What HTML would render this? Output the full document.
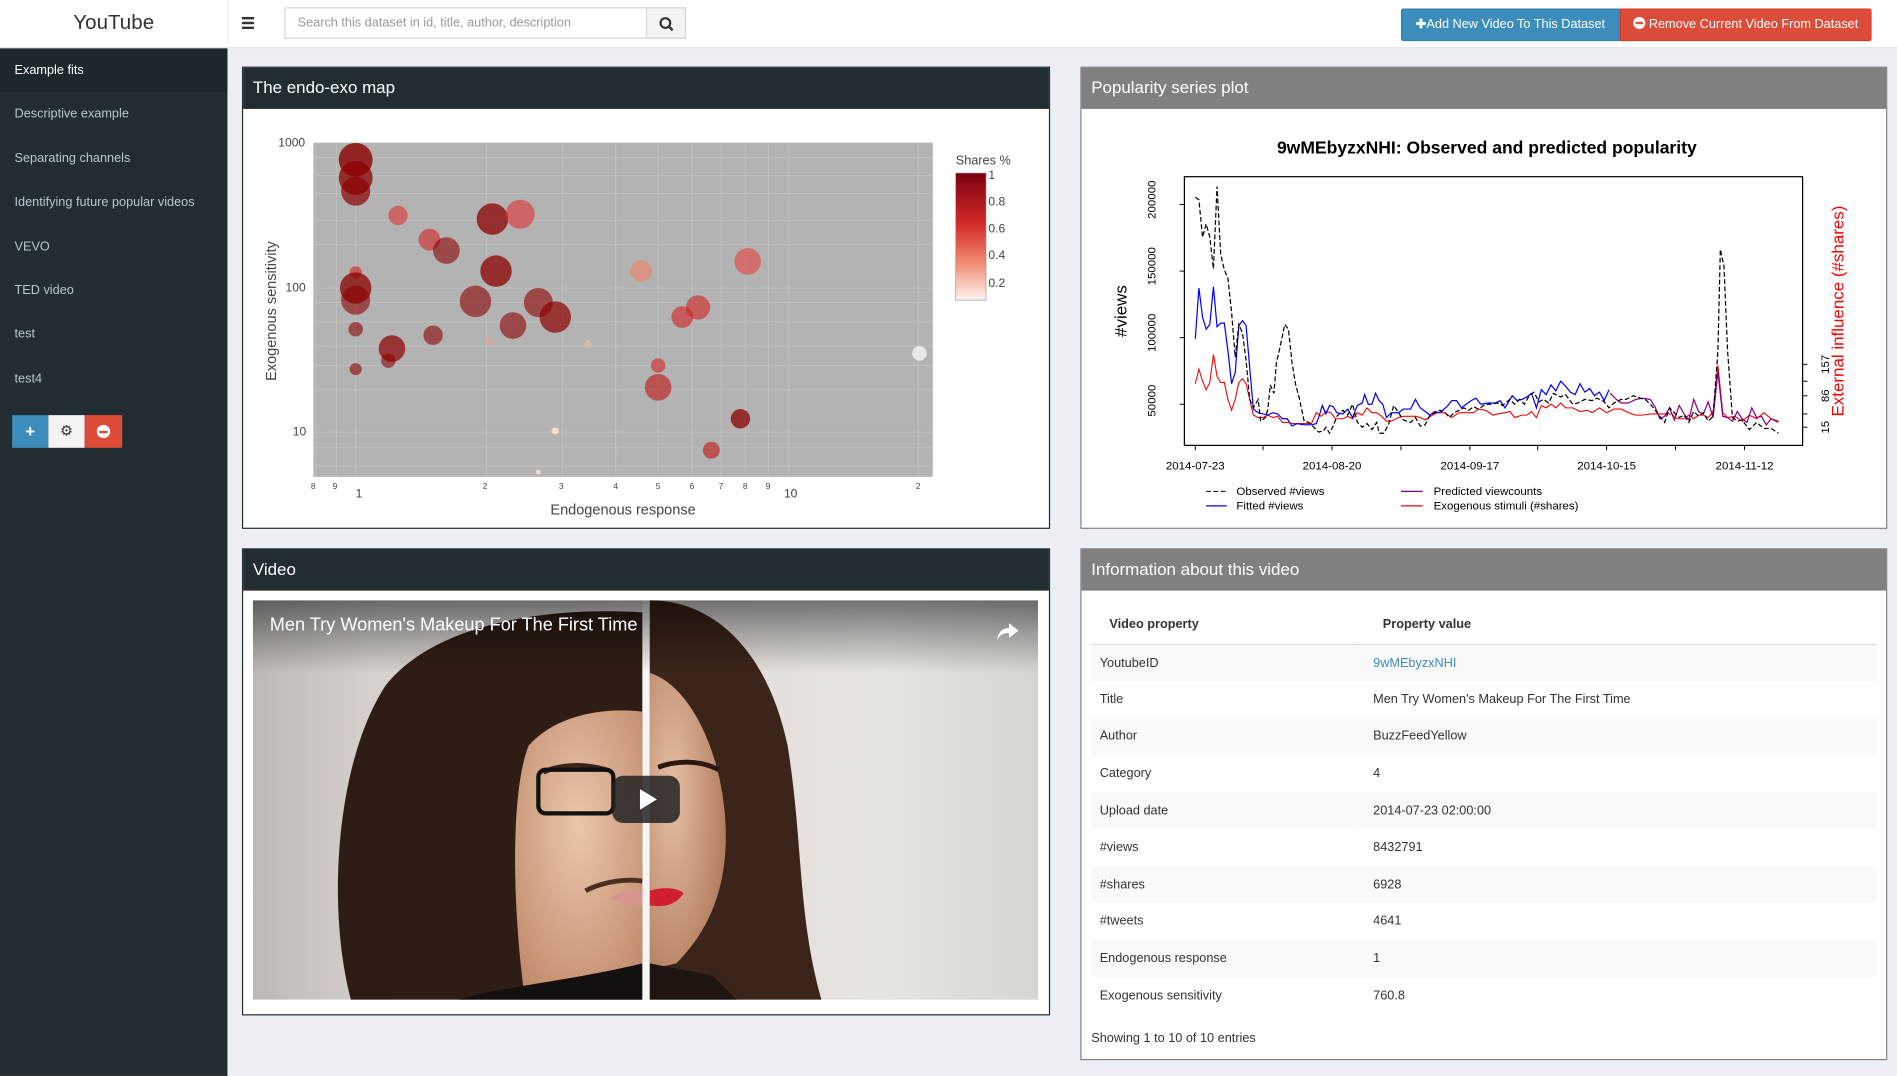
<!DOCTYPE html>
<html><head><meta charset="utf-8"><style>
html,body{margin:0;padding:0;width:1897px;height:1076px;overflow:hidden;background:#ecf0f5;}
#p{position:absolute;left:0;top:0;width:1568px;height:889px;transform:scale(1.2098,1.2103);transform-origin:0 0;font-family:"Liberation Sans",sans-serif;background:#ecf0f5;}
.a{position:absolute;}
.side a{position:absolute;left:0;width:188px;height:36px;line-height:36px;padding-left:12px;box-sizing:border-box;color:#b8c7ce;font-size:10.5px;}
.box{position:absolute;background:#fff;border:1px solid #d2d6de;box-sizing:border-box;}
.bh{height:34px;line-height:33px;color:#fff;font-size:14px;padding-left:8px;}
td{font-size:10.5px;color:#333;}
</style></head><body><div id="p">
<div class="a" style="left:0;top:0;width:1568px;height:40px;background:#fff;border-bottom:1px solid #e0e3e8;box-sizing:border-box"></div>
<div class="a" style="left:0;top:0;width:188px;height:40px;text-align:center;line-height:38px;font-size:17px;color:#333;border-right:1px solid #eee">YouTube</div>
<div class="a" style="left:200px;top:14px;width:10px;height:2px;background:#333;box-shadow:0 4px 0 #333,0 8px 0 #333"></div>
<div class="a" style="left:235px;top:6px;width:300px;height:26px;border:1px solid #d2d6de;box-sizing:border-box;font-size:10.5px;color:#999;line-height:24px;padding-left:10px">Search this dataset in id, title, author, description</div>
<div class="a" style="left:535px;top:6px;width:32px;height:26px;border:1px solid #d2d6de;border-left:none;box-sizing:border-box;background:#f4f4f4"><svg width="32" height="26"><circle cx="15" cy="12" r="4" fill="none" stroke="#333" stroke-width="1.8"/><line x1="18" y1="15" x2="21" y2="18" stroke="#333" stroke-width="2"/></svg></div>
<div class="a" style="left:1158px;top:7px;width:181px;height:27px;background:#3c8dbc;border:1px solid #367fa9;box-sizing:border-box;border-radius:2px 0 0 2px;color:#fff;font-size:10.5px;line-height:25px;text-align:center"><b>✚</b>Add New Video To This Dataset</div>
<div class="a" style="left:1339px;top:7px;width:208px;height:27px;background:#dd4b39;border:1px solid #d73925;box-sizing:border-box;border-radius:0 2px 2px 0;color:#fff;font-size:10.5px;line-height:25px;text-align:center"><span style="display:inline-block;width:10px;height:10px;border-radius:50%;background:#fff;vertical-align:-1px;position:relative"><span style="position:absolute;left:2px;top:4px;width:6px;height:2px;background:#dd4b39"></span></span> Remove Current Video From Dataset</div>
<div class="a side" style="left:0;top:40px;width:188px;height:849px;background:#222d32">
<a style="top:0;background:#1e282c;color:#fff">Example fits</a>
<a style="top:36px">Descriptive example</a>
<a style="top:73px">Separating channels</a>
<a style="top:109px">Identifying future popular videos</a>
<a style="top:146px">VEVO</a>
<a style="top:182px">TED video</a>
<a style="top:218px">test</a>
<a style="top:255px">test4</a>
<div class="a" style="left:10px;top:303px;width:30px;height:27px;background:#3c8dbc;color:#fff;text-align:center;line-height:27px;font-weight:bold;font-size:14px">+</div>
<div class="a" style="left:40px;top:303px;width:30px;height:27px;background:#f4f4f4;color:#333;text-align:center;line-height:27px;font-size:12px">⚙</div>
<div class="a" style="left:70px;top:303px;width:31px;height:27px;background:#dd4b39;text-align:center"><div style="margin:8px auto;width:11px;height:11px;border-radius:50%;background:#fff;position:relative"><div style="position:absolute;left:2px;top:4.5px;width:7px;height:2px;background:#dd4b39"></div></div></div>
</div>
<div class="box" style="left:200px;top:55px;width:668px;height:382px;border-color:#222d32"><div class="bh" style="background:#222d32">The endo-exo map</div></div>
<svg class="a" style="left:0;top:0" width="1568" height="889" font-family="Liberation Sans,sans-serif">
<rect x="259" y="118" width="512" height="276" fill="#b3b3b3"/>
<g stroke="#c4c4c4" stroke-width="0.6">
<line x1="259" y1="118" x2="771" y2="118"/><line x1="259" y1="238" x2="771" y2="238"/><line x1="259" y1="357" x2="771" y2="357"/>
<line x1="259" y1="130" x2="771" y2="130"/><line x1="259" y1="145" x2="771" y2="145"/><line x1="259" y1="160" x2="771" y2="160"/><line x1="259" y1="182" x2="771" y2="182"/><line x1="259" y1="202" x2="771" y2="202"/>
<line x1="259" y1="250" x2="771" y2="250"/><line x1="259" y1="266" x2="771" y2="266"/><line x1="259" y1="286" x2="771" y2="286"/><line x1="259" y1="302" x2="771" y2="302"/><line x1="259" y1="322" x2="771" y2="322"/>
<line x1="259" y1="370" x2="771" y2="370"/><line x1="259" y1="385" x2="771" y2="385"/>
<line x1="294" y1="118" x2="294" y2="394"/><line x1="402" y1="118" x2="402" y2="394"/><line x1="465" y1="118" x2="465" y2="394"/><line x1="509" y1="118" x2="509" y2="394"/><line x1="544" y1="118" x2="544" y2="394"/><line x1="572" y1="118" x2="572" y2="394"/><line x1="596" y1="118" x2="596" y2="394"/><line x1="616" y1="118" x2="616" y2="394"/><line x1="635" y1="118" x2="635" y2="394"/><line x1="652" y1="118" x2="652" y2="394"/><line x1="759" y1="118" x2="759" y2="394"/><line x1="278" y1="118" x2="278" y2="394"/><line x1="261" y1="118" x2="261" y2="394"/>
</g>
<g fill="#8b0000" fill-opacity="0.6">
<circle cx="294" cy="132" r="14" fill-opacity="0.8"/><circle cx="294" cy="147" r="14" fill-opacity="0.75"/><circle cx="294" cy="158" r="12" fill-opacity="0.7"/><circle cx="329" cy="178" r="8" fill="#e03030"/><circle cx="355" cy="198" r="9" fill="#d02020"/><circle cx="369" cy="207" r="11"/><circle cx="407" cy="181" r="13" fill-opacity="0.75"/><circle cx="430" cy="177" r="12" fill="#e03030"/><circle cx="294" cy="225" r="5" fill="#d02020"/><circle cx="294" cy="238" r="13" fill-opacity="0.75"/><circle cx="294" cy="248" r="12"/><circle cx="294" cy="272" r="6"/><circle cx="324" cy="288" r="11" fill-opacity="0.7"/><circle cx="321" cy="298" r="6"/><circle cx="294" cy="305" r="5"/><circle cx="358" cy="277" r="8"/><circle cx="393" cy="249" r="13"/><circle cx="410" cy="224" r="13" fill-opacity="0.75"/><circle cx="424" cy="269" r="11"/><circle cx="445" cy="250" r="12"/><circle cx="459" cy="262" r="13" fill-opacity="0.7"/><circle cx="404" cy="282" r="3" fill="#f0a080"/><circle cx="486" cy="284" r="3" fill="#f5c0a0"/><circle cx="530" cy="224" r="9" fill="#f08060"/><circle cx="618" cy="216" r="11" fill="#e84040"/><circle cx="577" cy="254" r="10" fill="#d02020"/><circle cx="564" cy="262" r="9" fill="#d02020"/><circle cx="544" cy="302" r="6" fill="#d02020"/><circle cx="544" cy="320" r="11" fill="#c01010"/><circle cx="612" cy="346" r="8" fill-opacity="0.75"/><circle cx="588" cy="372" r="7" fill="#c01010"/><circle cx="459" cy="356" r="3" fill="#f8e0d0" fill-opacity="0.9"/><circle cx="445" cy="390" r="2" fill="#f8e0d0" fill-opacity="0.9"/><circle cx="760" cy="292" r="6" fill="#fff" fill-opacity="0.7"/>
</g>
<g font-size="10" fill="#444">
<text x="230" y="121">1000</text><text x="236" y="241">100</text><text x="242" y="360">10</text>
<text x="294" y="411">1</text><text x="648" y="411">10</text><text x="399" y="404" font-size="7">2</text><text x="462" y="404" font-size="7">3</text><text x="507" y="404" font-size="7">4</text><text x="542" y="404" font-size="7">5</text><text x="570" y="404" font-size="7">6</text><text x="594" y="404" font-size="7">7</text><text x="614" y="404" font-size="7">8</text><text x="633" y="404" font-size="7">9</text><text x="757" y="404" font-size="7">2</text><text x="257" y="404" font-size="7">8</text><text x="275" y="404" font-size="7">9</text>
<text x="515" y="425" text-anchor="middle" font-size="12">Endogenous response</text>
<text transform="translate(228,257) rotate(-90)" text-anchor="middle" font-size="12">Exogenous sensitivity</text>
<text x="790" y="136" font-size="10.5">Shares %</text>
<text x="817" y="148" font-size="10">1</text><text x="817" y="170" font-size="10">0.8</text><text x="817" y="192" font-size="10">0.6</text><text x="817" y="214" font-size="10">0.4</text><text x="817" y="237" font-size="10">0.2</text>
</g>
<defs><linearGradient id="cb" x1="0" y1="0" x2="0" y2="1"><stop offset="0" stop-color="#7a0010"/><stop offset="0.4" stop-color="#d42a2a"/><stop offset="0.7" stop-color="#f08a70"/><stop offset="1" stop-color="#fff5f0"/></linearGradient></defs>
<rect x="790" y="143" width="25" height="105" fill="url(#cb)" stroke="#888" stroke-width="0.5"/>
</svg>
<div class="box" style="left:893px;top:55px;width:667px;height:382px;border-color:#808080"><div class="bh" style="background:#808080">Popularity series plot</div></div>
<svg class="a" style="left:0;top:0" width="1568" height="889" font-family="Liberation Sans,sans-serif">
<text x="1229" y="127" text-anchor="middle" font-size="14.5" font-weight="bold">9wMEbyzxNHI: Observed and predicted popularity</text>
<rect x="979" y="146" width="511" height="222" fill="none" stroke="#000" stroke-width="1"/>
<g font-size="9.5"><text transform="translate(955,165) rotate(-90)" text-anchor="middle">200000</text><text transform="translate(955,220) rotate(-90)" text-anchor="middle">150000</text><text transform="translate(955,275) rotate(-90)" text-anchor="middle">100000</text><text transform="translate(955,331) rotate(-90)" text-anchor="middle">50000</text>
<text transform="translate(1512,353) rotate(-90)" text-anchor="middle">15</text><text transform="translate(1512,327) rotate(-90)" text-anchor="middle">86</text><text transform="translate(1512,301) rotate(-90)" text-anchor="middle">157</text>
<text x="988" y="388" text-anchor="middle">2014-07-23</text><text x="1101" y="388" text-anchor="middle">2014-08-20</text><text x="1215" y="388" text-anchor="middle">2014-09-17</text><text x="1328" y="388" text-anchor="middle">2014-10-15</text><text x="1442" y="388" text-anchor="middle">2014-11-12</text>
<text x="1022" y="409">Observed #views</text><text x="1022" y="421">Fitted #views</text><text x="1185" y="409">Predicted viewcounts</text><text x="1185" y="421">Exogenous stimuli (#shares)</text></g>
<text transform="translate(931,257) rotate(-90)" text-anchor="middle" font-size="14">#views</text>
<text transform="translate(1524,257) rotate(-90)" text-anchor="middle" font-size="14" fill="#f00">External influence (#shares)</text>
<g stroke="#000" stroke-width="0.8"><line x1="988" y1="368" x2="988" y2="372"/><line x1="1044" y1="368" x2="1044" y2="372"/><line x1="1101" y1="368" x2="1101" y2="372"/><line x1="1158" y1="368" x2="1158" y2="372"/><line x1="1215" y1="368" x2="1215" y2="372"/><line x1="1271" y1="368" x2="1271" y2="372"/><line x1="1328" y1="368" x2="1328" y2="372"/><line x1="1385" y1="368" x2="1385" y2="372"/><line x1="1442" y1="368" x2="1442" y2="372"/>
<line x1="1490" y1="353" x2="1494" y2="353"/><line x1="1490" y1="327" x2="1494" y2="327"/><line x1="1490" y1="301" x2="1494" y2="301"/><line x1="1490" y1="342" x2="1494" y2="342"/><line x1="1490" y1="315" x2="1494" y2="315"/><line x1="975" y1="169" x2="979" y2="169"/><line x1="975" y1="224" x2="979" y2="224"/><line x1="975" y1="279" x2="979" y2="279"/><line x1="975" y1="334" x2="979" y2="334"/>
<line x1="997" y1="406" x2="1014" y2="406" stroke-dasharray="4,2"/></g>
<line x1="997" y1="418" x2="1014" y2="418" stroke="#00f"/><line x1="1158" y1="406" x2="1176" y2="406" stroke="#800080"/><line x1="1158" y1="418" x2="1176" y2="418" stroke="#f00"/>
<polyline fill="none" stroke="#f00" stroke-width="0.9" points="988,317 991,305 994,315 997,322 1000,316 1003,293 1006,311 1009,316 1012,316 1015,330 1018,339 1021,330 1024,316 1027,313 1030,317 1033,330 1036,343 1040,345 1044,345 1048,343 1052,345 1056,344 1060,349 1064,349 1068,350 1072,350 1078,350 1084,350 1088,341 1092,344 1096,340 1100,341 1104,346 1110,346 1114,344 1118,346 1122,341 1126,343 1130,337 1134,341 1138,341 1142,344 1146,348 1150,348 1156,345 1160,344 1166,344 1170,344 1174,345 1178,347 1184,343 1188,341 1194,341 1200,345 1206,341 1212,341 1218,341 1222,338 1228,339 1234,343 1238,342 1244,341 1248,340 1252,345 1258,343 1262,343 1266,340 1270,345 1274,335 1278,337 1282,334 1286,337 1290,333 1294,337 1300,337 1306,340 1312,339 1316,341 1322,337 1328,341 1334,338 1340,338 1346,341 1352,343 1358,343 1364,342 1370,342 1376,342 1382,342 1386,346 1392,346 1396,343 1400,346 1404,343 1408,343 1412,345 1416,340 1420,302 1424,341 1428,345 1434,344 1440,348 1446,343 1452,346 1458,341 1464,346 1470,348"/>
<polyline fill="none" stroke="#00f" stroke-width="1" points="988,280 991,238 994,262 997,272 1000,268 1003,237 1006,270 1009,267 1012,267 1015,290 1018,317 1021,308 1024,269 1027,265 1030,269 1033,304 1036,338 1040,341 1044,342 1048,343 1052,341 1056,342 1060,346 1064,346 1068,352 1072,350 1078,351 1084,351 1088,350 1090,345 1093,335 1096,342 1099,335 1102,336 1105,341 1110,342 1114,338 1118,345 1122,335 1126,333 1128,326 1131,334 1134,334 1137,325 1140,331 1143,334 1146,345 1150,341 1156,341 1160,338 1166,338 1170,330 1174,337 1178,340 1182,343 1186,340 1190,341 1196,336 1200,331 1204,331 1208,337 1212,334 1216,331 1220,329 1224,334 1230,333 1236,333 1240,331 1244,337 1250,327 1254,331 1258,330 1262,328 1266,325 1270,337 1274,322 1278,326 1282,318 1286,323 1290,315 1294,319 1298,324 1302,326 1306,317 1310,324 1314,321 1318,327 1322,324 1326,331 1330,322"/>
<polyline fill="none" stroke="#800080" stroke-width="1" points="1331,325 1336,330 1340,333 1346,333 1352,330 1358,329 1364,330 1368,336 1372,346 1376,344 1380,337 1384,347 1388,335 1392,342 1396,347 1400,330 1404,340 1408,342 1412,332 1416,345 1420,307 1424,344 1428,345 1432,348 1436,340 1440,346 1444,349 1448,337 1452,345 1456,344 1460,351 1464,346 1470,349"/>
<polyline fill="none" stroke="#000" stroke-width="1" stroke-dasharray="4,2" points="988,163 991,165 994,196 997,185 1000,196 1003,222 1006,154 1009,210 1012,223 1015,230 1018,258 1021,295 1024,268 1027,275 1030,298 1033,330 1036,337 1040,330 1042,348 1046,345 1048,338 1050,318 1053,325 1055,300 1058,287 1062,268 1065,272 1068,300 1071,318 1074,329 1078,348 1082,349 1086,353 1090,357 1094,356 1096,353 1099,358 1102,352 1105,344 1110,339 1114,343 1118,334 1122,349 1126,353 1130,350 1134,355 1138,349 1140,358 1144,358 1148,350 1152,335 1156,341 1160,347 1166,349 1170,345 1174,352 1178,351 1182,343 1186,341 1190,339 1194,340 1198,345 1202,341 1206,339 1210,337 1214,339 1218,336 1222,338 1228,334 1232,334 1238,333 1242,335 1248,330 1252,334 1256,330 1260,334 1264,327 1268,324 1272,332 1276,330 1280,333 1284,325 1290,328 1294,326 1300,334 1304,333 1310,330 1316,331 1320,329 1326,332 1330,337 1334,333 1340,330 1344,330 1350,327 1356,329 1360,330 1366,336 1372,344 1376,349 1380,337 1384,341 1388,345 1392,343 1396,349 1400,340 1404,344 1408,341 1412,348 1416,344 1420,290 1422,206 1425,220 1428,290 1432,345 1436,348 1440,347 1446,355 1452,349 1458,354 1464,354 1470,358"/>
</svg>
<div class="box" style="left:200px;top:453px;width:668px;height:386px;border-color:#222d32"><div class="bh" style="background:#222d32">Video</div></div>
<svg class="a" style="left:209px;top:496px" width="649" height="330">
<defs>
<linearGradient id="bg" x1="0" x2="1"><stop offset="0" stop-color="#bdb8b3"/><stop offset="0.15" stop-color="#d5d0cb"/><stop offset="0.8" stop-color="#e8e4e0"/><stop offset="1" stop-color="#d8d4d0"/></linearGradient>
<radialGradient id="face1" cx="0.5" cy="0.4" r="0.7"><stop offset="0" stop-color="#ecc6ab"/><stop offset="1" stop-color="#c08a6a"/></radialGradient>
<radialGradient id="face2" cx="0.3" cy="0.4" r="0.7"><stop offset="0" stop-color="#e6bfa4"/><stop offset="1" stop-color="#b47e60"/></radialGradient>
<linearGradient id="top" x1="0" y1="0" x2="0" y2="1"><stop offset="0" stop-color="#000" stop-opacity="0.5"/><stop offset="1" stop-color="#000" stop-opacity="0"/></linearGradient>
</defs>
<rect width="649" height="330" fill="url(#bg)"/>
<path d="M81,330 C60,250 70,130 110,70 C150,20 240,5 322,10 L322,330 Z" fill="#2e1d14"/>
<path d="M225,330 C215,260 212,160 228,120 C250,95 290,88 322,92 L322,330 Z" fill="url(#face1)"/>
<path d="M170,330 C200,320 260,315 322,300 L322,330 Z" fill="#141010"/>
<path d="M240,142 C255,135 275,135 292,140" stroke="#3a2418" stroke-width="4" fill="none"/>
<rect x="236" y="140" width="62" height="36" rx="6" fill="none" stroke="#111" stroke-width="3.5"/>
<path d="M275,240 C290,232 310,230 322,232" stroke="#4a3020" stroke-width="4" fill="none"/>
<path d="M322,240 C310,238 300,242 296,246 C305,252 315,252 322,252 Z" fill="#d89590"/>
<path d="M328,0 C380,0 425,40 442,120 C455,200 450,260 470,330 L328,330 Z" fill="#3b2419"/>
<path d="M328,60 C360,70 385,120 390,175 C395,230 380,270 350,300 L328,305 Z" fill="url(#face2)"/>
<path d="M335,138 C350,132 370,132 385,140" stroke="#2a1810" stroke-width="4" fill="none"/>
<path d="M328,240 C340,236 352,238 356,242 C350,252 338,254 328,252 Z" fill="#d02030"/>
<path d="M328,300 L380,310 L400,330 L328,330 Z" fill="#1e1410"/>
<rect x="322" y="0" width="6" height="330" fill="#f5f5f5"/>
<rect width="649" height="60" fill="url(#top)"/>
<text x="14" y="25" fill="#fff" font-size="15" font-family="Liberation Sans,sans-serif">Men Try Women's Makeup For The First Time</text>
<path d="M625,19 L633,25 L625,31 L625,27 C620,27 617,29 615,33 C616,27 619,23 625,23 Z" fill="#fff"/>
<rect x="297" y="145" width="56" height="39" rx="9" fill="#222" fill-opacity="0.85"/>
<path d="M320,156 L334,164.5 L320,173Z" fill="#fff"/>
</svg>
<div class="box" style="left:893px;top:453px;width:667px;height:423px;border-color:#808080"><div class="bh" style="background:#808080">Information about this video</div>
<table style="position:absolute;left:8px;top:47px;width:649px;border-collapse:collapse;">
<tr style="height:31px;border-bottom:1px solid #ddd"><td style="padding-left:15px;font-weight:bold;width:205px">Video property</td><td style="padding-left:20px;font-weight:bold">Property value</td></tr>
<tr style="height:30.6px;background:#f9f9f9"><td style="padding-left:7px">YoutubeID</td><td style="padding-left:12px;color:#3c8dbc">9wMEbyzxNHI</td></tr>
<tr style="height:30.6px"><td style="padding-left:7px">Title</td><td style="padding-left:12px">Men Try Women's Makeup For The First Time</td></tr>
<tr style="height:30.6px;background:#f9f9f9"><td style="padding-left:7px">Author</td><td style="padding-left:12px">BuzzFeedYellow</td></tr>
<tr style="height:30.6px"><td style="padding-left:7px">Category</td><td style="padding-left:12px">4</td></tr>
<tr style="height:30.6px;background:#f9f9f9"><td style="padding-left:7px">Upload date</td><td style="padding-left:12px">2014-07-23 02:00:00</td></tr>
<tr style="height:30.6px"><td style="padding-left:7px">#views</td><td style="padding-left:12px">8432791</td></tr>
<tr style="height:30.6px;background:#f9f9f9"><td style="padding-left:7px">#shares</td><td style="padding-left:12px">6928</td></tr>
<tr style="height:30.6px"><td style="padding-left:7px">#tweets</td><td style="padding-left:12px">4641</td></tr>
<tr style="height:30.6px;background:#f9f9f9"><td style="padding-left:7px">Endogenous response</td><td style="padding-left:12px">1</td></tr>
<tr style="height:30.6px"><td style="padding-left:7px">Exogenous sensitivity</td><td style="padding-left:12px">760.8</td></tr>
</table>
<div class="a" style="left:8px;top:398px;font-size:10.5px;color:#333">Showing 1 to 10 of 10 entries</div>
</div>
</div></body></html>
